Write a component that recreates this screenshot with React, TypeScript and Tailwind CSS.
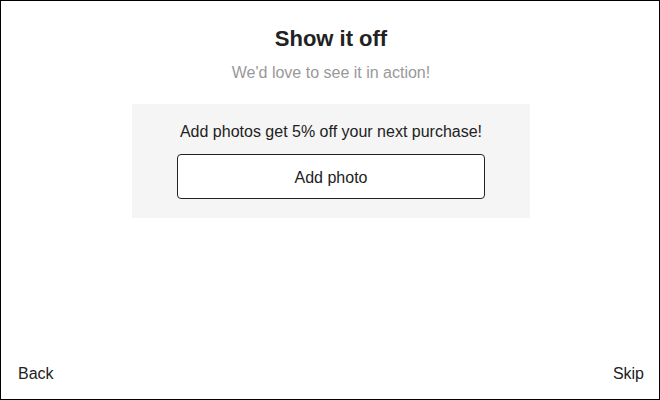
export default function App() {
  return (
    <div
      className="w-[660px] h-[400px] bg-white border border-black flex flex-col text-[#222]"
      style={{ fontFamily: '"Liberation Sans", Arial, sans-serif' }}
    >
      <div className="flex flex-col items-center pt-[24px] pl-[2px]">
        <h1 className="text-[22px] leading-[28px] font-bold text-[#222]">Show it off</h1>
        <p className="mt-[8px] text-[16px] leading-[24px] text-[#999]">We'd love to see it in action!</p>
        <div className="mt-[19px] w-[398px] bg-[#f5f5f5] flex flex-col items-center pt-[16px] pb-[19px]">
          <p className="text-[16px] leading-[24px] text-[#222]">Add photos get 5% off your next purchase!</p>
          <button className="mt-[10px] w-[308px] h-[45px] pt-[2px] bg-white border border-[#222] rounded-[4px] text-[16px] text-[#222]">
            Add photo
          </button>
        </div>
      </div>
      <div className="mt-auto flex justify-between pl-[17px] pr-[15px] pb-[13px] text-[16px] leading-[24px] text-[#222]">
        <button>Back</button>
        <button>Skip</button>
      </div>
    </div>
  );
}
